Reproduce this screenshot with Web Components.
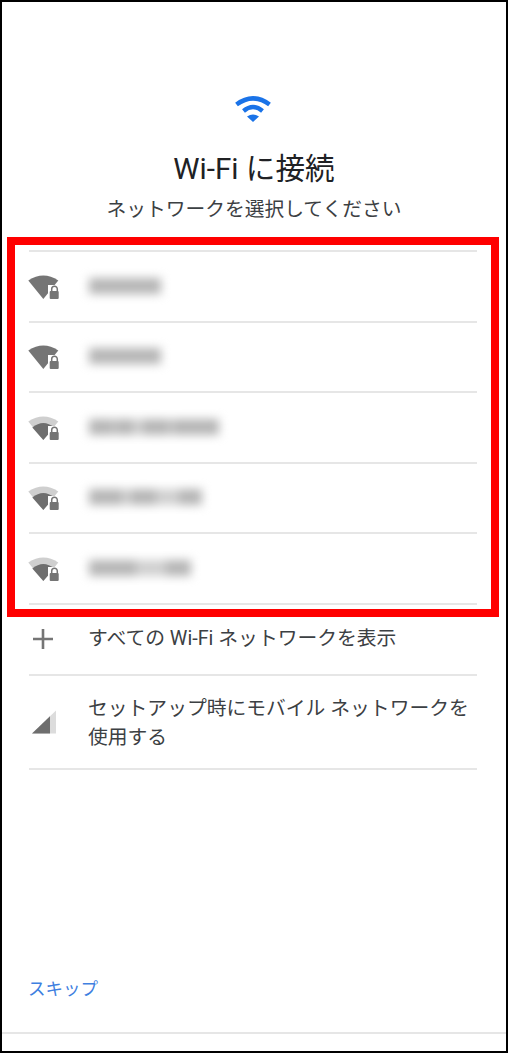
<!DOCTYPE html>
<html lang="ja">
<head>
<meta charset="utf-8">
<title>Wi-Fi に接続</title>
<style>
    html, body { margin: 0; background: #fff; }
    body { font-family: Roboto, "Noto Sans CJK JP", sans-serif; }
</style>
</head>
<body>
<setup-page>
    <setup-header slot="header" title-text="Wi-Fi に接続" sub-text="ネットワークを選択してください"></setup-header>

    <network-row segments="72"></network-row>
    <network-row segments="72"></network-row>
    <network-row segments="24,3,17,10,26,4,46" weak></network-row>
    <network-row segments="33,9,25,23,23" weak></network-row>
    <network-row segments="47,30,25" weak></network-row>

    <action-row>
        <svg slot="icon" width="24" height="24" viewBox="0 0 24 24">
            <path d="M12 2v20M2 12h20" stroke="#757575" stroke-width="2.6" fill="none"/>
        </svg>
        すべての Wi-Fi ネットワークを表示
    </action-row>
    <action-row tall>
        <svg slot="icon" style="margin-left:1px" width="24" height="24" viewBox="0 0 24 24">
            <path d="M0 23.500L24 0.500V23.500Z" fill="#dcdcdc"/>
            <path d="M0 23.500L18 6.250V23.500Z" fill="#6e6e6e"/>
        </svg>
        セットアップ時にモバイル ネットワークを使用する
    </action-row>

    <skip-footer slot="footer">スキップ</skip-footer>
    <red-frame slot="overlay"></red-frame>
</setup-page>

<script>
const pageTemplate = document.createElement("template");
pageTemplate.innerHTML = `
    <style>
        :host {
            display: flex;
            flex-direction: column;
            position: relative;
            box-sizing: border-box;
            width: 508px;
            height: 1053px;
            border: 2px solid #000;
            background: #fff;
            overflow: hidden;
        }
        #list {
            display: flex;
            flex-direction: column;
            margin: 0 29px 0 27px;
        }
        #footer {
            margin-top: auto;
        }
    </style>
    <slot name="header"></slot>
    <div id="list"><slot></slot></div>
    <div id="footer"><slot name="footer"></slot></div>
    <slot name="overlay"></slot>
`;

class SetupPage extends HTMLElement {
    constructor() {
        super();
        this.attachShadow({ mode: "open" }).append(pageTemplate.content.cloneNode(true));
    }
}

const headerTemplate = document.createElement("template");
headerTemplate.innerHTML = `
    <style>
        :host {
            display: flex;
            flex-direction: column;
            align-items: center;
            padding: 93px 0 26px;
            font-family: Roboto, "Noto Sans CJK JP", sans-serif;
            color: #202124;
        }
        svg { display: block; margin-left: -3px; }
        h1 {
            margin: 29px 0 0;
            font-size: 29.600px;
            line-height: 36px;
            font-weight: 400;
        }
        p {
            margin: 9px 0 0;
            font-size: 19.750px;
            line-height: 28px;
            color: #3c4043;
        }
    </style>
    <svg width="36" height="27" viewBox="0 0 36 27">
        <path d="M1.500 9.500Q18 -2.800 34.500 9.500" stroke="#1a73e8" stroke-width="4.600" fill="none"/>
        <path d="M8.500 16Q18 8 27.500 16" stroke="#1a73e8" stroke-width="4.400" fill="none"/>
        <path d="M12 21.500Q18 17.500 24 21.500L18 27Z" fill="#1a73e8"/>
    </svg>
    <h1 id="title"></h1>
    <p id="sub"></p>
`;

class SetupHeader extends HTMLElement {
    constructor() {
        super();
        this.attachShadow({ mode: "open" }).append(headerTemplate.content.cloneNode(true));
    }

    connectedCallback() {
        this.shadowRoot.querySelector("#title").textContent = this.getAttribute("title-text");
        this.shadowRoot.querySelector("#sub").textContent = this.getAttribute("sub-text");
    }
}

const networkTemplate = document.createElement("template");
networkTemplate.innerHTML = `
    <style>
        :host {
            display: flex;
            align-items: center;
            box-sizing: border-box;
            height: 70.500px;
            border-top: 2px solid #e6e6e6;
        }
        svg { display: block; margin: 1px 0 0 -1px; flex: none; }
        /* el nombre de la red va borroso en la captura, no se lee */
        #name {
            display: flex;
            height: 16px;
            margin: 0 0 1px 29px;
            filter: blur(5px);
        }
        #name span { display: block; background: #b6b6b6; }
    </style>
    <svg width="32" height="26" viewBox="0 0 32 26">
        <path id="fan" d="M0.300 6.500Q15.300 -3.500 30.300 6.500L15.300 25Z" fill="#757575"/>
        <path id="fan-low" d="M4.300 12.500Q15.300 3.500 26.300 12.500L15.300 25Z" fill="#6e6e6e" display="none"/>
        <rect x="20" y="11" width="12" height="15" fill="#fff"/>
        <path d="M23.700 17.500v-2.500a2.800 2.800 0 0 1 5.600 0v2.500" stroke="#757575" stroke-width="1.500" fill="none"/>
        <rect x="21.700" y="17" width="9" height="8" rx="1" fill="#757575"/>
    </svg>
    <div id="name"></div>
`;

class NetworkRow extends HTMLElement {
    constructor() {
        super();
        this.attachShadow({ mode: "open" }).append(networkTemplate.content.cloneNode(true));
    }

    connectedCallback() {
        const nameEl = this.shadowRoot.querySelector("#name");
        const segments = (this.getAttribute("segments") || "72").split(",");

        // anchos alternos: tramo, hueco, tramo...
        segments.forEach((width, i) => {
            const seg = document.createElement("span");
            seg.style.width = `${width}px`;
            if (i % 2 === 1) seg.style.background = "#d0d0d0";
            nameEl.append(seg);
        });

        if (this.hasAttribute("weak")) {
            this.shadowRoot.querySelector("#fan").setAttribute("fill", "#cfcfcf");
            this.shadowRoot.querySelector("#fan-low").removeAttribute("display");
        }
    }
}

const actionTemplate = document.createElement("template");
actionTemplate.innerHTML = `
    <style>
        :host {
            display: flex;
            align-items: center;
            box-sizing: border-box;
            height: 71px;
            border-top: 2px solid #e6e6e6;
            font-family: Roboto, "Noto Sans CJK JP", sans-serif;
            font-size: 19.800px;
            line-height: 29px;
            color: #3c4043;
        }
        :host([tall]) {
            height: 96px;
            border-bottom: 2px solid #e6e6e6;
        }
        #icon {
            flex: none;
            width: 24px;
            margin: 0 33px 0 2px;
        }
        #text { flex: 1; padding-bottom: 1px; }
        :host([tall]) #text { padding: 2px 0 0; }
        ::slotted(svg) { display: block; }
    </style>
    <div id="icon"><slot name="icon"></slot></div>
    <div id="text"><slot></slot></div>
`;

class ActionRow extends HTMLElement {
    constructor() {
        super();
        this.attachShadow({ mode: "open" }).append(actionTemplate.content.cloneNode(true));
    }
}

const footerTemplate = document.createElement("template");
footerTemplate.innerHTML = `
    <style>
        :host {
            display: block;
            font-family: Roboto, "Noto Sans CJK JP", sans-serif;
            font-size: 17.500px;
            line-height: 26px;
            color: #3f80e0;
        }
        #skip { padding: 0 26px 30px; }
        #rule { height: 2px; background: #e6e6e6; margin-bottom: 17px; }
    </style>
    <div id="skip"><slot></slot></div>
    <div id="rule"></div>
`;

class SkipFooter extends HTMLElement {
    constructor() {
        super();
        this.attachShadow({ mode: "open" }).append(footerTemplate.content.cloneNode(true));
    }
}

// marco rojo de la anotacion, va encima de la lista
const frameTemplate = document.createElement("template");
frameTemplate.innerHTML = `
    <style>
        :host {
            display: block;
            position: absolute;
            left: 5px;
            top: 235px;
            width: 492px;
            height: 380px;
            box-sizing: border-box;
            border: 8px solid #ff0000;
            pointer-events: none;
        }
    </style>
`;

class RedFrame extends HTMLElement {
    constructor() {
        super();
        this.attachShadow({ mode: "open" }).append(frameTemplate.content.cloneNode(true));
    }
}

customElements.define("setup-page", SetupPage);
customElements.define("setup-header", SetupHeader);
customElements.define("network-row", NetworkRow);
customElements.define("action-row", ActionRow);
customElements.define("skip-footer", SkipFooter);
customElements.define("red-frame", RedFrame);
</script>
</body>
</html>
